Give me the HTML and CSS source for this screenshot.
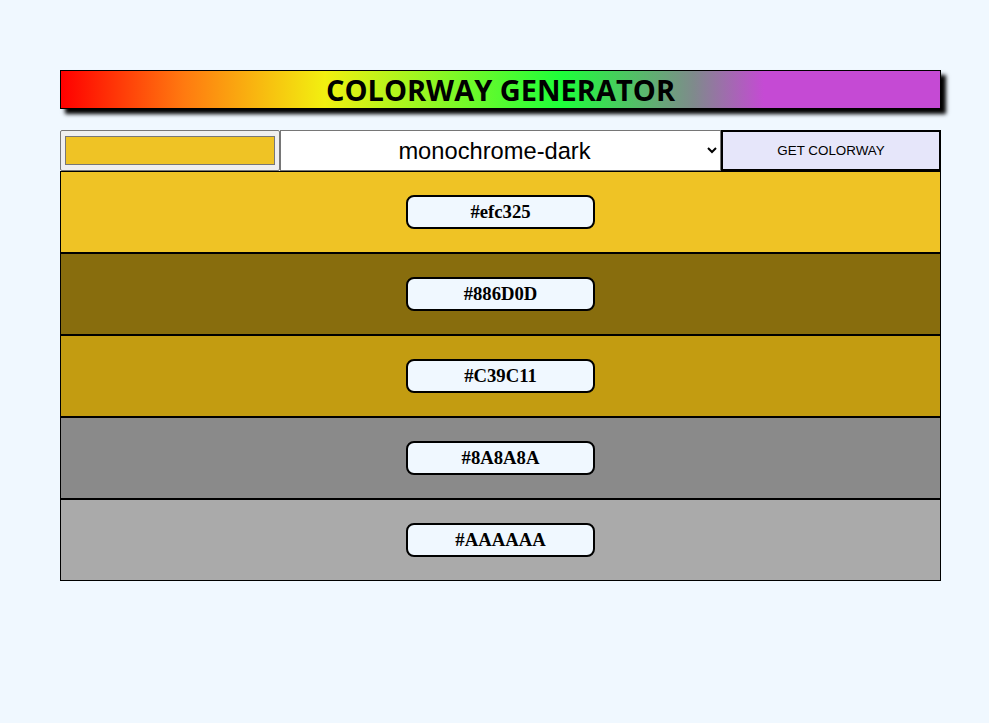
FILE: index.html
```html
<!DOCTYPE html>
<html>
<head>
<meta charset="utf-8">
<link rel="stylesheet" href="styles.css">
</head>
<body>
<div class="app">
  <h1 class="title">COLORWAY GENERATOR</h1>
  <div class="controls">
    <input class="picker" type="color" value="#efc325">
    <select class="mode">
      <option>monochrome-dark</option>
    </select>
    <button class="go">GET COLORWAY</button>
  </div>
  <div class="swatches">
    <div class="swatch" style="background:#efc325"><span class="label">#efc325</span></div>
    <div class="swatch" style="background:#886D0D"><span class="label">#886D0D</span></div>
    <div class="swatch" style="background:#C39C11"><span class="label">#C39C11</span></div>
    <div class="swatch" style="background:#8A8A8A"><span class="label">#8A8A8A</span></div>
    <div class="swatch" style="background:#AAAAAA"><span class="label">#AAAAAA</span></div>
  </div>
</div>
</body>
</html>
```
FILE: styles.css
```css
html, body {
  margin: 0;
  padding: 0;
  background: #f0f8ff;
}
.app {
  width: 881px;
  margin: 70px 0 0 60px;
}
.title {
  margin: 0;
  height: 39px;
  box-sizing: border-box;
  border: 1px solid #000;
  box-shadow: 5px 5px 4px #000;
  background: linear-gradient(to right, #ff0000 0%, #ff7a10 14%, #f2f010 30%, #1dff3a 57%, #7f8a8c 72%, #c54ad4 80%, #c54ad4 100%);
  font-family: "Open Sans", sans-serif;
  font-weight: 700;
  font-size: 29px;
  line-height: 37px;
  text-align: center;
  color: #000;
}
.controls {
  display: flex;
  margin-top: 21px;
  height: 41px;
}
.picker {
  width: 220px;
  height: 41px;
  box-sizing: border-box;
  margin: 0;
  border: 1px solid #767676;
  background: #efefef;
  padding: 1px 2px;
  border-radius: 2px;
}
.mode {
  width: 441px;
  height: 41px;
  box-sizing: border-box;
  margin: 0;
  border: 1px solid #767676;
  background: #fff;
  font-family: "Liberation Sans", Arial, sans-serif;
  font-size: 23.7px;
  text-align: center;
  text-align-last: center;
  color: #000;
  border-radius: 0;
}
.go {
  width: 220px;
  height: 41px;
  box-sizing: border-box;
  margin: 0;
  border: 2px solid #000;
  background: #e6e6fa;
  font-family: "Liberation Sans", Arial, sans-serif;
  font-size: 13.4px;
  color: #000;
}
.swatches {
  display: flex;
  flex-direction: column;
}
.swatch {
  height: 82px;
  box-sizing: border-box;
  border: 1px solid #000;
  display: flex;
  align-items: center;
  justify-content: center;
}
.label {
  width: 189px;
  height: 34px;
  box-sizing: border-box;
  border: 2px solid #000;
  border-radius: 8px;
  background: #f0f8ff;
  font-family: "Liberation Serif", "Times New Roman", serif;
  font-weight: 700;
  font-size: 18.7px;
  line-height: 30px;
  text-align: center;
}
```
